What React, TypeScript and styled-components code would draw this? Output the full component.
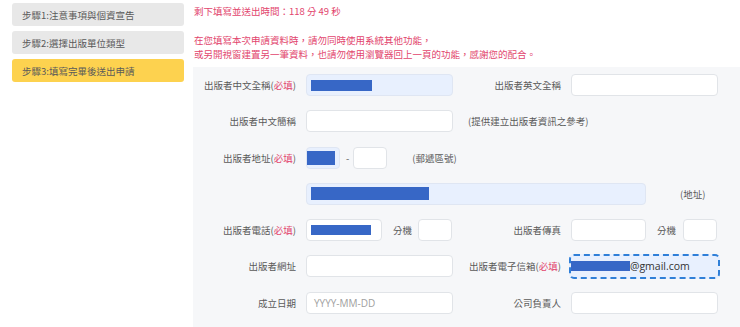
import React from 'react'
import styled, { createGlobalStyle, css } from 'styled-components'

const colors = {
  text: '#5a5a5a',
  red: '#e2456d',
  step: '#e8e8e8',
  stepActive: '#fdd24f',
  panel: '#f6f7f9',
  border: '#e1e4e8',
  autofill: '#e8f0fe',
  redact: '#3767c6',
  focus: '#2f7fd8',
}

const font = `'Noto Sans CJK TC', 'Noto Sans', sans-serif`

const GlobalStyle = createGlobalStyle`
  html, body {
    margin: 0;
    background: #fff;
    font-family: ${font};
  }
`

const Page = styled.div`
  display: flex;
  align-items: flex-start;
  gap: 9px;
  padding-left: 12px;
  width: 728px;
  height: 327px;
  overflow: hidden;
`

const Sidebar = styled.div`
  display: flex;
  flex-direction: column;
  gap: 5px;
  width: 172px;
  padding-top: 3px;
  flex-shrink: 0;
`

const Step = styled.div<{ $active?: boolean }>`
  height: 23px;
  display: flex;
  align-items: center;
  padding-left: 10px;
  border-radius: 3px;
  font-size: 9.5px;
  color: ${colors.text};
  background: ${p => (p.$active ? colors.stepActive : colors.step)};
`

const Main = styled.div`
  flex: 1;
  display: flex;
  flex-direction: column;
  padding-top: 5px;
`

const Notice = styled.div`
  color: ${colors.red};
  font-size: 9.5px;
  line-height: 12px;
  padding-left: 1px;
`

const NoticeBlock = styled(Notice)`
  margin-top: 15.5px;
  line-height: 14px;
  white-space: nowrap;
`

const Panel = styled.div`
  margin-top: 6.5px;
  background: ${colors.panel};
  padding: 7px 10px 14px 0;
  display: grid;
  grid-template-columns: 113px 162px 103px 147px;
  grid-auto-rows: 22px;
  row-gap: 14.3px;
  align-items: center;
`

const LabelText = styled.div`
  text-align: right;
  padding-right: 10px;
  font-size: 9.5px;
  color: ${colors.text};
  white-space: nowrap;
`

const Required = styled.span`
  color: ${colors.red};
`

const Cell = styled.div<{ $span?: number; $ml?: number }>`
  display: flex;
  align-items: center;
  height: 22px;
  margin-left: ${p => p.$ml || 0}px;
  ${p => p.$span && css`grid-column: span ${p.$span};`}
`

const Spacer = styled.div``

const Field = styled.div<{ $w?: number; $auto?: boolean; $focus?: boolean; $ml?: number; $flush?: boolean }>`
  box-sizing: border-box;
  width: ${p => p.$w || 147}px;
  height: 22px;
  flex-shrink: 0;
  display: flex;
  align-items: center;
  margin-left: ${p => p.$ml || 0}px;
  padding-left: ${p => (p.$flush ? 0 : 4)}px;
  border-radius: 4px;
  border: 1px solid ${p => (p.$auto ? '#dfe6f3' : colors.border)};
  background: ${p => (p.$auto ? colors.autofill : '#fff')};
  font-size: 10.5px;
  color: #333;
  ${p =>
    p.$focus &&
    css`
      height: 25px;
      padding-left: 0;
      border: 2px dashed ${colors.focus};
      border-radius: 5px;
      font-family: 'Open Sans', 'Liberation Sans', sans-serif;
      font-size: 10.5px;
    `}
`

const Redact = styled.span<{ $w: number; $h?: number }>`
  display: inline-block;
  width: ${p => p.$w}px;
  height: ${p => p.$h || 11}px;
  background: ${colors.redact};
  flex-shrink: 0;
`

const Placeholder = styled.span`
  color: #a0a0a0;
  font-family: 'Open Sans', 'Liberation Sans', sans-serif;
  font-size: 10px;
  padding-left: 3px;
`

const Hint = styled.span<{ $ml?: number }>`
  font-size: 9.5px;
  color: ${colors.text};
  margin-left: ${p => p.$ml || 0}px;
  white-space: nowrap;
`

const Label = ({ children, required }: { children: React.ReactNode; required?: boolean }) => (
  <LabelText>
    {children}
    {required && (
      <>
        (<Required>必填</Required>)
      </>
    )}
  </LabelText>
)

export default function App () {
  return (
    <>
      <GlobalStyle />
      <Page>
        <Sidebar>
          <Step>步驟1:注意事項與個資宣告</Step>
          <Step>步驟2:選擇出版單位類型</Step>
          <Step $active>步驟3:填寫完畢後送出申請</Step>
        </Sidebar>
        <Main>
          <Notice>剩下填寫並送出時間：118 分 49 秒</Notice>
          <NoticeBlock>
            在您填寫本次申請資料時，請勿同時使用系統其他功能，
            <br />
            或另開視窗建置另一筆資料，也請勿使用瀏覽器回上一頁的功能，感謝您的配合。
          </NoticeBlock>
          <Panel>
            <Label required>出版者中文全稱</Label>
            <Cell>
              <Field $auto>
                <Redact $w={61} />
              </Field>
            </Cell>
            <Label>出版者英文全稱</Label>
            <Cell>
              <Field />
            </Cell>

            <Label>出版者中文簡稱</Label>
            <Cell>
              <Field />
            </Cell>
            <Cell $span={2}>
              <Hint>(提供建立出版者資訊之參考)</Hint>
            </Cell>

            <Label required>出版者地址</Label>
            <Cell>
              <Field $w={34} $auto $flush>
                <Redact $w={28} $h={14} />
              </Field>
              <Hint $ml={6}>-</Hint>
              <Field $w={34} $ml={4} />
              <Hint $ml={25}>(郵遞區號)</Hint>
            </Cell>
            <Cell $span={2} />

            <Spacer />
            <Cell $span={3}>
              <Field $w={340} $auto>
                <Redact $w={118} $h={13} />
              </Field>
              <Hint $ml={34}>(地址)</Hint>
            </Cell>

            <Label required>出版者電話</Label>
            <Cell>
              <Field $w={76}>
                <Redact $w={60} $h={10} />
              </Field>
              <Hint $ml={11}>分機</Hint>
              <Field $w={34} $ml={6} />
            </Cell>
            <Label>出版者傳真</Label>
            <Cell>
              <Field $w={75} />
              <Hint $ml={11}>分機</Hint>
              <Field $w={34} $ml={7} />
            </Cell>

            <Label>出版者網址</Label>
            <Cell>
              <Field />
            </Cell>
            <Label required>出版者電子信箱</Label>
            <Cell $ml={-2}>
              <Field $w={151} $auto $focus>
                <Redact $w={59} $h={10} />
                @gmail.com
              </Field>
            </Cell>

            <Label>成立日期</Label>
            <Cell>
              <Field>
                <Placeholder>YYYY-MM-DD</Placeholder>
              </Field>
            </Cell>
            <Label>公司負責人</Label>
            <Cell>
              <Field />
            </Cell>
          </Panel>
        </Main>
      </Page>
    </>
  )
}
